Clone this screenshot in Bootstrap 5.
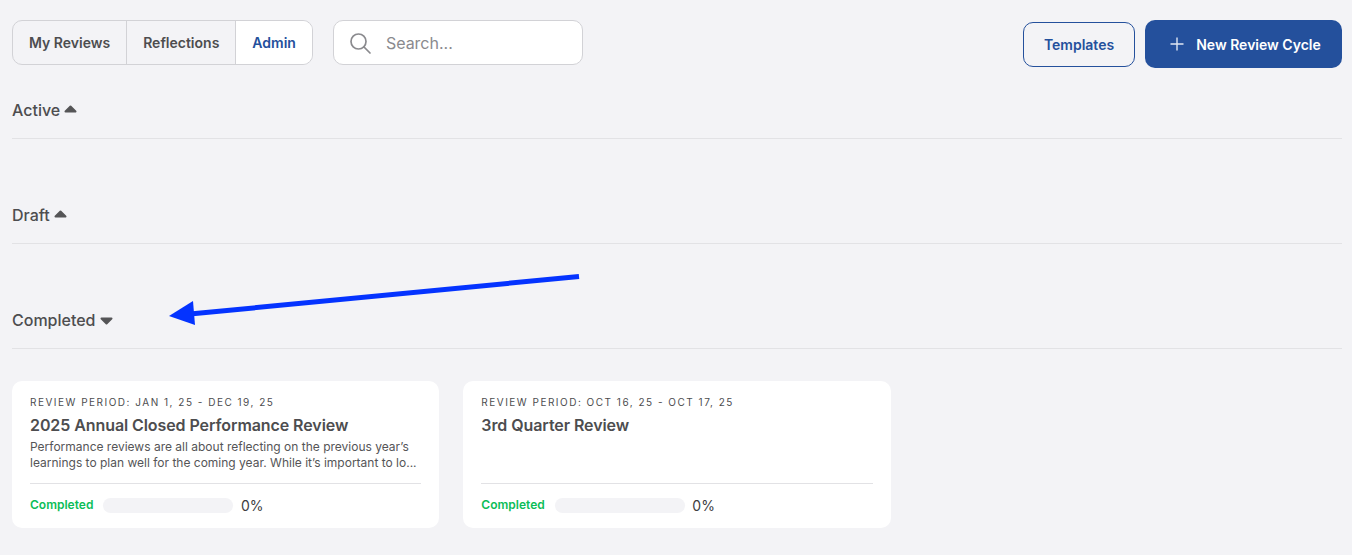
<!DOCTYPE html>
<html lang="en">
<head>
<meta charset="utf-8">
<title>Reviews</title>
<link href="https://cdn.jsdelivr.net/npm/bootstrap@5.3.0/dist/css/bootstrap.min.css" rel="stylesheet">
<style>
html,body{height:555px;overflow:hidden}
body{background:#f3f3f6;font-family:Inter,"Liberation Sans",sans-serif;color:#4d4d4f;position:relative}
.page-wrap{padding:20px 10px 0 12px}
.top-bar{height:48px}
.seg-tabs{height:45px;border:1px solid #d2d2d6;border-radius:10px;overflow:hidden}
.seg-tab{display:flex;align-items:center;padding:0 16px;font-size:14px;font-weight:600;color:#4d4d4f;text-decoration:none;border-right:1px solid #d2d2d6}
.seg-tab:last-child{border-right:0}
.seg-tab.on{background:#fff;color:#24509c}
.search-box{width:250px;height:45px;margin-left:20px;background:#fff;border:1px solid #d2d2d6;border-radius:10px;padding-left:14px;gap:14px}
.search-box input{border:0;outline:0;background:transparent;font-size:16px;line-height:22px;height:22px;margin-top:1px;width:180px;padding:0;color:#4d4d4f}
.search-box input::placeholder{color:#8a8a8e;opacity:1}
.act-group{column-gap:10px}
.btn-tpl{width:112px;height:45px;margin-top:2px;border:1px solid #24509c;border-radius:10px;color:#24509c;font-size:14px;font-weight:600;background:transparent;padding:0}
.btn-new{width:197px;height:48px;background:#24509c;border:0;border-radius:10px;color:#fff;font-size:14px;font-weight:600;padding:0 0 0 4px;gap:12px}
.sect-head{height:71px;padding-bottom:16px;border-bottom:1px solid #e2e2e5;font-size:16px;font-weight:500;color:#4d4d4f;gap:4px}
.caret-icon{margin-bottom:9px}
.caret-down{margin-bottom:7px}
.sect-gap{height:34px}
.cards-grid{display:grid;grid-template-columns:repeat(3,1fr);gap:24px;margin-top:32px}
.rev-card{background:#fff;border-radius:10px;height:147px;padding:15px 18px 0}
.rev-period{font-size:10px;letter-spacing:1.5px;line-height:12px;color:#4d4d4f;text-transform:uppercase}
.rev-title{font-size:16px;font-weight:600;letter-spacing:-.08px;line-height:20px;margin:7px 0 4px;color:#4d4d4f}
.rev-desc{font-size:12px;line-height:16px;height:32px;white-space:pre-line;color:#555557}
.rev-foot{border-top:1px solid #e2e2e5;margin-top:12px;padding-top:14px;height:30px}
.rev-status{font-size:12px;font-weight:600;color:#0bbd58;width:73.4px;line-height:15px;margin-top:-2px}
.rev-bar{width:130px;height:15px;background:#f3f3f6;border-radius:8px}
.rev-pct{font-size:14px;margin-left:7.6px;line-height:15px;color:#3d3d3f}
.note-arrow{position:absolute;left:165px;top:268px;pointer-events:none}
</style>
</head>
<body>
<div class="page-wrap">
  <div class="top-bar d-flex align-items-start justify-content-between">
    <div class="d-flex">
      <div class="seg-tabs d-flex">
        <a class="seg-tab" href="#">My Reviews</a>
        <a class="seg-tab" href="#">Reflections</a>
        <a class="seg-tab on" href="#">Admin</a>
      </div>
      <div class="search-box d-flex align-items-center">
        <svg width="24" height="24" viewBox="0 0 24 24" fill="none" stroke="#8a8a8e" stroke-width="1.7" stroke-linecap="round"><circle cx="10.5" cy="10.500" r="7.5"/><path d="M16 16l6 6"/></svg>
        <input type="text" placeholder="Search...">
      </div>
    </div>
    <div class="d-flex act-group">
      <button class="btn btn-tpl" type="button">Templates</button>
      <button class="btn btn-new d-flex align-items-center justify-content-center" type="button">
        <svg width="14" height="14" viewBox="0 0 14 14" stroke="#dfe6f2" stroke-width="1.4" fill="none"><path d="M7 0.5v13M0.5 7h13"/></svg>
        <span>New Review Cycle</span>
      </button>
    </div>
  </div>

  <div class="sect-head d-flex align-items-end">Active
    <svg class="caret-icon" width="13" height="8" viewBox="0 0 13 8"><path d="M6.500 1.500L11.500 6.500H1.500Z" fill="#555557" stroke="#555557" stroke-width="2" stroke-linejoin="round"/></svg>
  </div>
  <div class="sect-gap"></div>
  <div class="sect-head d-flex align-items-end">Draft
    <svg class="caret-icon" width="13" height="8" viewBox="0 0 13 8"><path d="M6.500 1.500L11.500 6.500H1.500Z" fill="#555557" stroke="#555557" stroke-width="2" stroke-linejoin="round"/></svg>
  </div>
  <div class="sect-gap"></div>
  <div class="sect-head d-flex align-items-end">Completed
    <svg class="caret-down" width="13" height="8" viewBox="0 0 13 8"><path d="M6.500 6.500L11.500 1.500H1.500Z" fill="#555557" stroke="#555557" stroke-width="2" stroke-linejoin="round"/></svg>
  </div>

  <div class="cards-grid">
    <div class="rev-card">
      <div class="rev-period">Review Period: Jan 1, 25 - Dec 19, 25</div>
      <div class="rev-title">2025 Annual Closed Performance Review</div>
      <div class="rev-desc">Performance reviews are all about reflecting on the previous year’s
learnings to plan well for the coming year. While it’s important to lo...</div>
      <div class="rev-foot d-flex align-items-center">
        <span class="rev-status">Completed</span><span class="rev-bar"></span><span class="rev-pct">0%</span>
      </div>
    </div>
    <div class="rev-card">
      <div class="rev-period">Review Period: Oct 16, 25 - Oct 17, 25</div>
      <div class="rev-title">3rd Quarter Review</div>
      <div class="rev-desc"></div>
      <div class="rev-foot d-flex align-items-center">
        <span class="rev-status">Completed</span><span class="rev-bar"></span><span class="rev-pct">0%</span>
      </div>
    </div>
  </div>
</div>
<svg class="note-arrow" width="420" height="64" viewBox="165 268 420 64"><path d="M579 276.500L190 314" stroke="#0433ff" stroke-width="5" fill="none"/><path d="M169 316l24-15 2 24z" fill="#0433ff"/></svg>
</body>
</html>
